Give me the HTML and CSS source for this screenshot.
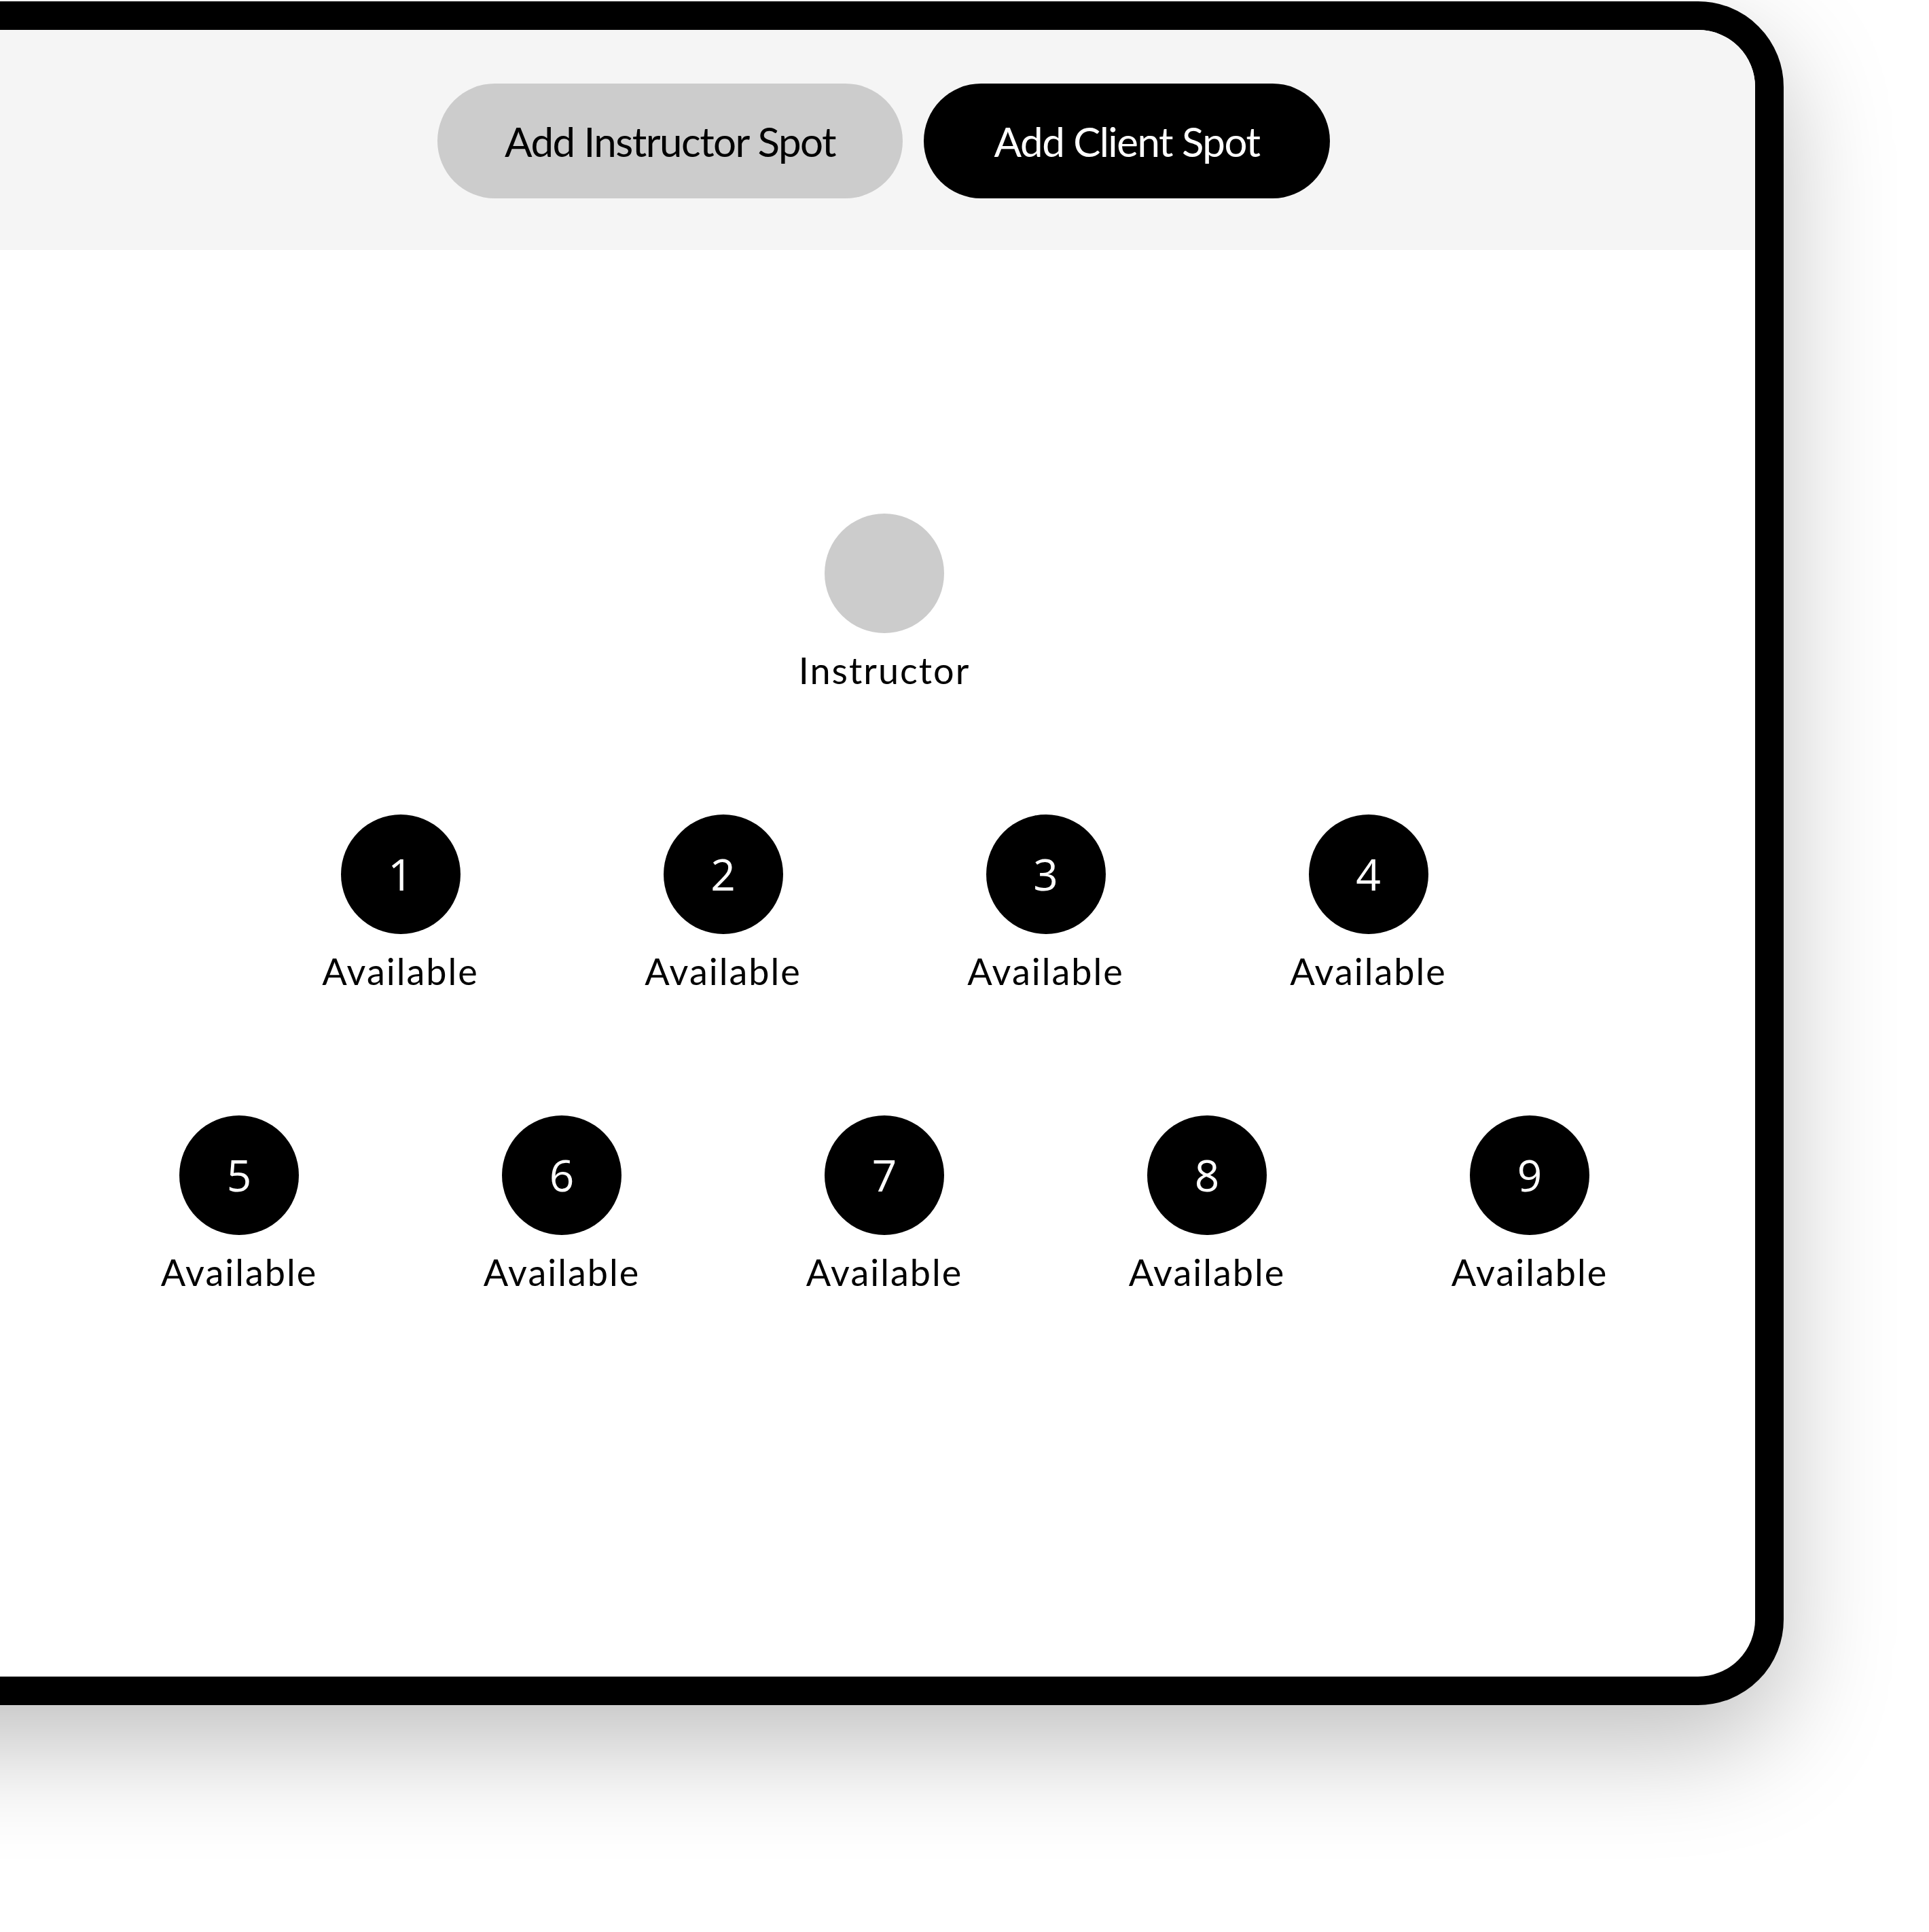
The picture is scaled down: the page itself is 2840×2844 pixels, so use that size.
FILE: index.html
```html
<!DOCTYPE html>
<html lang="en">
<head>
<meta charset="utf-8">
<title>Class Layout</title>
<link rel="stylesheet" href="styles.css">
</head>
<body>
<div class="frame">
  <header class="toolbar">
    <button class="btn btn-light">Add Instructor Spot</button>
    <button class="btn btn-dark">Add Client Spot</button>
  </header>
  <main class="floor">
    <div class="row">
      <div class="spot"><div class="dot dot-instructor"></div><div class="label">Instructor</div></div>
    </div>
    <div class="row">
      <div class="spot"><div class="dot">1</div><div class="label">Available</div></div>
      <div class="spot"><div class="dot">2</div><div class="label">Available</div></div>
      <div class="spot"><div class="dot">3</div><div class="label">Available</div></div>
      <div class="spot"><div class="dot">4</div><div class="label">Available</div></div>
    </div>
    <div class="row">
      <div class="spot"><div class="dot">5</div><div class="label">Available</div></div>
      <div class="spot"><div class="dot">6</div><div class="label">Available</div></div>
      <div class="spot"><div class="dot">7</div><div class="label">Available</div></div>
      <div class="spot"><div class="dot">8</div><div class="label">Available</div></div>
      <div class="spot"><div class="dot">9</div><div class="label">Available</div></div>
    </div>
  </main>
</div>
</body>
</html>
```

FILE: styles.css
```css
html, body {
  margin: 0;
  padding: 0;
  background: #fff;
}
body {
  width: 2840px;
  height: 2844px;
  overflow: hidden;
  font-family: Lato, "Noto Sans", sans-serif;
}
.frame {
  box-sizing: border-box;
  width: 2926px;
  height: 2508px;
  margin: 2px 0 0 -300px;
  border: 42px solid #000;
  border-radius: 126px;
  overflow: hidden;
  background: #fff;
  box-shadow: 0 60px 160px rgba(0, 0, 0, 0.25);
}
.toolbar {
  height: 324px;
  background: #f5f5f5;
  display: flex;
  justify-content: center;
  align-items: center;
  gap: 31px;
  padding: 3px 0 0 276px;
  box-sizing: border-box;
}
.btn {
  height: 169px;
  border: 0;
  border-radius: 85px;
  padding: 0;
  font-family: Lato, "Noto Sans", sans-serif;
  font-size: 60px;
  font-weight: 400;
  letter-spacing: -1.5px;
  display: flex;
  align-items: center;
  justify-content: center;
}
.btn-light {
  width: 685px;
  background: #ccc;
  color: #000;
}
.btn-dark {
  width: 598px;
  background: #000;
  color: #fff;
}
.floor {
  padding: 388px 0 0 278px;
  display: flex;
  flex-direction: column;
  align-items: center;
  gap: 179px;
}
.row {
  display: flex;
  justify-content: center;
}
.spot {
  width: 475px;
  display: flex;
  flex-direction: column;
  align-items: center;
}
.dot {
  width: 176px;
  height: 176px;
  border-radius: 50%;
  background: #000;
  color: #fff;
  display: flex;
  align-items: center;
  justify-content: center;
  font-family: "Open Sans", Lato, sans-serif;
  font-size: 64px;
  line-height: 1;
}
.dot-instructor {
  background: #ccc;
}
.label {
  margin-top: 23px;
  font-size: 54px;
  line-height: 1.2;
  letter-spacing: 2px;
  color: #000;
}
```
